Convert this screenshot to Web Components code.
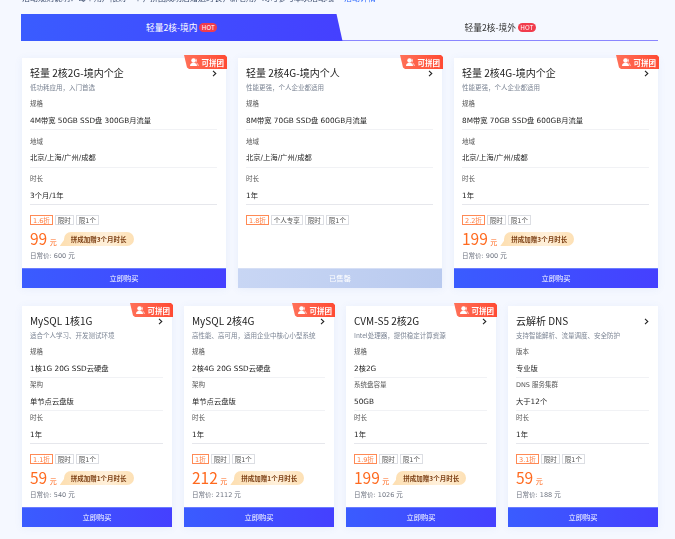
<!DOCTYPE html>
<html lang="zh">
<head>
<meta charset="utf-8">
<title>轻量2核</title>
<style>
  html, body { margin: 0; background: #f5f8ff; }
  body { font-family: "Noto Sans CJK SC", "Noto Sans", sans-serif; color: #222; width: 675px; height: 539px; overflow: hidden; }
  main { display: flex; flex-direction: column; padding: 0 17px 0 22px; filter: blur(.3px); }
  .row { display: grid; gap: 12px; }
  .row.three { grid-template-columns: repeat(3, 204px); height: 230px; margin-top: 17px; --section: 37.5px; --first: 38px; }
  .row.four { grid-template-columns: repeat(4, 150px); height: 221px; margin-top: 18px; --section: 33px; --first: 38px; }
</style>
</head>
<body>
<top-notice>活动规则说明：每个用户限购一个，拼团成功后赠送时长，新老用户均可参与本次活动哦<a>活动详情</a></top-notice>
<main>
  <sale-tabs>
    <sale-tab active>轻量2核-境内</sale-tab>
    <sale-tab>轻量2核-境外</sale-tab>
  </sale-tabs>

  <div class="row three">
    <product-card name="轻量 2核2G-境内个企" desc="低功耗应用，入门首选" group price="99" bonus="拼成加赠3个月时长" daily="日常价: 600 元">
      <spec-row label="规格">4M带宽 50GB SSD盘 300GB月流量</spec-row>
      <spec-row label="地域">北京/上海/广州/成都</spec-row>
      <spec-row label="时长">3个月/1年</spec-row>
      <deal-tag slot="tags" hot>1.6折</deal-tag><deal-tag slot="tags">限时</deal-tag><deal-tag slot="tags">限1个</deal-tag>
    </product-card>
    <product-card name="轻量 2核4G-境内个人" desc="性能更强，个人企业都适用" group sold>
      <spec-row label="规格">8M带宽 70GB SSD盘 600GB月流量</spec-row>
      <spec-row label="地域">北京/上海/广州/成都</spec-row>
      <spec-row label="时长">1年</spec-row>
      <deal-tag slot="tags" hot>1.8折</deal-tag><deal-tag slot="tags">个人专享</deal-tag><deal-tag slot="tags">限时</deal-tag><deal-tag slot="tags">限1个</deal-tag>
    </product-card>
    <product-card name="轻量 2核4G-境内个企" desc="性能更强，个人企业都适用" group price="199" bonus="拼成加赠3个月时长" daily="日常价: 900 元">
      <spec-row label="规格">8M带宽 70GB SSD盘 600GB月流量</spec-row>
      <spec-row label="地域">北京/上海/广州/成都</spec-row>
      <spec-row label="时长">1年</spec-row>
      <deal-tag slot="tags" hot>2.2折</deal-tag><deal-tag slot="tags">限时</deal-tag><deal-tag slot="tags">限1个</deal-tag>
    </product-card>
  </div>

  <div class="row four">
    <product-card name="MySQL 1核1G" desc="适合个人学习、开发测试环境" group price="59" bonus="拼成加赠1个月时长" daily="日常价: 540 元">
      <spec-row label="规格">1核1G 20G SSD云硬盘</spec-row>
      <spec-row label="架构">单节点云盘版</spec-row>
      <spec-row label="时长">1年</spec-row>
      <deal-tag slot="tags" hot>1.1折</deal-tag><deal-tag slot="tags">限时</deal-tag><deal-tag slot="tags">限1个</deal-tag>
    </product-card>
    <product-card name="MySQL 2核4G" desc="高性能、高可用，适用企业中核心小型系统" group price="212" bonus="拼成加赠1个月时长" daily="日常价: 2112 元">
      <spec-row label="规格">2核4G 20G SSD云硬盘</spec-row>
      <spec-row label="架构">单节点云盘版</spec-row>
      <spec-row label="时长">1年</spec-row>
      <deal-tag slot="tags" hot>1折</deal-tag><deal-tag slot="tags">限时</deal-tag><deal-tag slot="tags">限1个</deal-tag>
    </product-card>
    <product-card name="CVM-S5 2核2G" desc="Intel处理器，提供稳定计算资源" group price="199" bonus="拼成加赠3个月时长" daily="日常价: 1026 元">
      <spec-row label="规格">2核2G</spec-row>
      <spec-row label="系统盘容量">50GB</spec-row>
      <spec-row label="时长">1年</spec-row>
      <deal-tag slot="tags" hot>1.9折</deal-tag><deal-tag slot="tags">限时</deal-tag><deal-tag slot="tags">限1个</deal-tag>
    </product-card>
    <product-card name="云解析 DNS" desc="支持智能解析、流量调度、安全防护" price="59" daily="日常价: 188 元">
      <spec-row label="版本">专业版</spec-row>
      <spec-row label="DNS 服务集群">大于12个</spec-row>
      <spec-row label="时长">1年</spec-row>
      <deal-tag slot="tags" hot>3.1折</deal-tag><deal-tag slot="tags">限时</deal-tag><deal-tag slot="tags">限1个</deal-tag>
    </product-card>
  </div>
</main>

<script>
// small helper, every element below stamps its markup into an open shadow root
const makeShadow = (el, html) => {
    el.attachShadow({ mode: 'open' });
    el.shadowRoot.innerHTML = html;
};

// latin runs are wider than the CJK font's own in the reference, DejaVu gets close
const SMALL_FONT = '"DejaVu Sans", "Noto Sans CJK SC", sans-serif';

class TopNotice extends HTMLElement {
    constructor() {
        super();
        makeShadow(this, `
            <style>
                :host { display: flex; align-items: flex-end; height: 4px; overflow: hidden; padding-left: 22px; filter: blur(.3px); }
                .line { font-size: 8px; line-height: 13px; height: 13px; white-space: nowrap; color: #3a4a6a; flex: none; }
                ::slotted(a) { color: #2f6bff; margin-left: 10px; }
            </style>
            <div class="line"><slot></slot></div>`);
    }
}

class SaleTabs extends HTMLElement {
    constructor() {
        super();
        makeShadow(this, `
            <style>
                :host { display: grid; grid-template-columns: 1fr 1fr; height: 27px; margin: 10px 0 0 -1px; }
            </style>
            <slot></slot>`);
    }
}

class SaleTab extends HTMLElement {
    constructor() {
        super();
        makeShadow(this, `
            <style>
                :host { display: flex; align-items: center; justify-content: center; gap: 2px; font-size: 8.7px; color: #333;
                        padding: 0 0 0 3px; box-sizing: border-box; border-bottom: 1.5px solid #8a86ff; }
                :host([active]) { color: #fff; border-bottom: 0; margin-right: -3px; padding: 0 0 1px;
                        background: linear-gradient(90deg, #3a5cff, #4540ff);
                        clip-path: polygon(0 0, calc(100% - 6px) 0, 100% 100%, 0 100%); }
                .hot { background: #f13c4c; color: #fff; font-size: 6.4px; line-height: 9px; padding: 0 2.5px; border-radius: 4.5px; }
            </style>
            <slot></slot><span class="hot">HOT</span>`);
    }
}

class SpecRow extends HTMLElement {
    constructor() {
        super();
        const label = this.getAttribute('label') || '';
        makeShadow(this, `
            <style>
                :host { display: flex; flex-direction: column; height: var(--section, 38px); box-sizing: border-box;
                        border-bottom: 1px solid #f1f2f5; font-family: ${SMALL_FONT}; }
                :host(:last-of-type) { border-bottom-color: #e6e7ec; }
                .label { font-size: 6.5px; line-height: 10px; color: #555; margin-top: auto; margin-bottom: 5.5px; }
                .value { font-size: 7.3px; line-height: 11px; color: #1e1e1e; margin-bottom: 3.5px; white-space: nowrap; }
            </style>
            <div class="label">${label}</div>
            <div class="value"><slot></slot></div>`);
    }
}

class DealTag extends HTMLElement {
    constructor() {
        super();
        makeShadow(this, `
            <style>
                :host { display: inline-flex; align-items: center; height: 10px; padding: 0 2px; font-size: 6.5px; color: #555;
                        border: 1px solid #dcdee3; box-sizing: border-box; background: #fff; white-space: nowrap; font-family: ${SMALL_FONT}; }
                :host([hot]) { color: #ff7a3c; border-color: #ff8a55; }
            </style>
            <slot></slot>`);
    }
}

class ProductCard extends HTMLElement {
    constructor() {
        super();
        const name = this.getAttribute('name') || '';
        const desc = this.getAttribute('desc') || '';
        const price = this.getAttribute('price');
        const bonus = this.getAttribute('bonus');
        const daily = this.getAttribute('daily') || '';
        const sold = this.hasAttribute('sold');

        const ribbon = this.hasAttribute('group') ? `
            <div class="ribbon">
                <svg width="9" height="8" viewBox="0 0 18 16"><circle cx="7" cy="5" r="4.500" fill="#fff"/><path d="M0 16c0-4.500 3-6.500 7-6.500s7 2 7 6.500z" fill="#fff"/><path d="M11.500 1a4.500 4.500 0 0 1 0 8c3.500 1 6 3 6 7H15.500c0-3-1.500-5-4-6.500z" fill="#fff" opacity=".75"/></svg>
                <span>可拼团</span>
            </div>` : '';
        const priceBlock = price ? `
            <div class="price-line">
                <span class="price">${price}</span><span class="unit">元</span>
                ${bonus ? `<span class="bonus">${bonus}</span>` : ''}
            </div>
            <div class="daily">${daily}</div>` : '';

        makeShadow(this, `
            <style>
                :host { display: flex; flex-direction: column; position: relative; background: #fff;
                        box-shadow: 0 1px 8px rgba(80, 110, 200, .08); }
                .body { flex: 1; display: flex; flex-direction: column; padding: 8px 9px 0 8px; min-height: 0; }
                .head { display: flex; align-items: center; justify-content: space-between; height: 14px; }
                .name { font-size: 10px; line-height: 14px; color: #1c1c1c; white-space: nowrap; }
                .desc { font-size: 6.5px; line-height: 10px; color: #7c8594; margin-top: 2px; white-space: nowrap; }
                .specs { margin-top: calc(var(--first, 38px) - var(--section, 38px)); }
                .tags { display: flex; gap: 2px; margin-top: 10px; }
                .price-line { display: flex; align-items: flex-end; margin-top: 3px; height: 20px; }
                .price { font-size: 15.5px; line-height: 20px; color: #ff6a1f; }
                .unit { font-size: 7px; line-height: 10px; color: #ff6a1f; margin-left: 2.5px; margin-bottom: 1px; }
                .bonus { position: relative; font-size: 6.5px; font-weight: 700; line-height: 14px; height: 14px; padding: 0 7px; color: #7c3f14;
                         margin: 0 0 2px 7px; border-radius: 7px 7px 7px 0; white-space: nowrap;
                         background: linear-gradient(90deg, #fde0b4, #fff0da 60%, #fde0b4); }
                .bonus::before { content: ""; position: absolute; left: -4px; bottom: 0; width: 5px; height: 7px; background: #fde0b4;
                         clip-path: polygon(100% 0, 100% 100%, 0 100%); }
                .daily { font-size: 6.5px; line-height: 10px; color: #6e7480; margin-top: 3px; font-family: ${SMALL_FONT}; }
                .buy { flex: none; height: 20px; display: flex; align-items: center; justify-content: center; font-size: 7.3px; color: #fff;
                       background: linear-gradient(90deg, #3a5cff, #4540ff); margin-top: auto; box-shadow: inset 0 1px #6a7cff; }
                .buy.sold { background: linear-gradient(90deg, #c8d6f4, #b9caef); box-shadow: inset 0 1px #d6dff5; }
                .ribbon { position: absolute; top: -3px; right: -1px; width: 43px; height: 14px; display: flex; align-items: center;
                          justify-content: center; gap: 2.5px; padding-left: 3px; box-sizing: border-box; color: #fff; font-size: 7.5px; font-weight: 700;
                          background: linear-gradient(90deg, #ff7058, #ff4a33);
                          clip-path: polygon(0 0, calc(100% - 2px) 0, 100% 2px, 100% 100%, 5px 100%, 3px 90%); }
                svg.go { flex: none; }
            </style>
            ${ribbon}
            <div class="body">
                <div class="head">
                    <span class="name">${name}</span>
                    <svg class="go" width="5" height="7" viewBox="0 0 5 7"><path d="M1 .8 3.800 3.500 1 6.200" fill="none" stroke="#222" stroke-width="1.100"/></svg>
                </div>
                <div class="desc">${desc}</div>
                <div class="specs"><slot></slot></div>
                <div class="tags"><slot name="tags"></slot></div>
                ${priceBlock}
            </div>
            <div class="buy ${sold ? 'sold' : ''}">${sold ? '已售罄' : '立即购买'}</div>`);
    }
}

customElements.define('top-notice', TopNotice);
customElements.define('sale-tabs', SaleTabs);
customElements.define('sale-tab', SaleTab);
customElements.define('spec-row', SpecRow);
customElements.define('deal-tag', DealTag);
customElements.define('product-card', ProductCard);
</script>
</body>
</html>
